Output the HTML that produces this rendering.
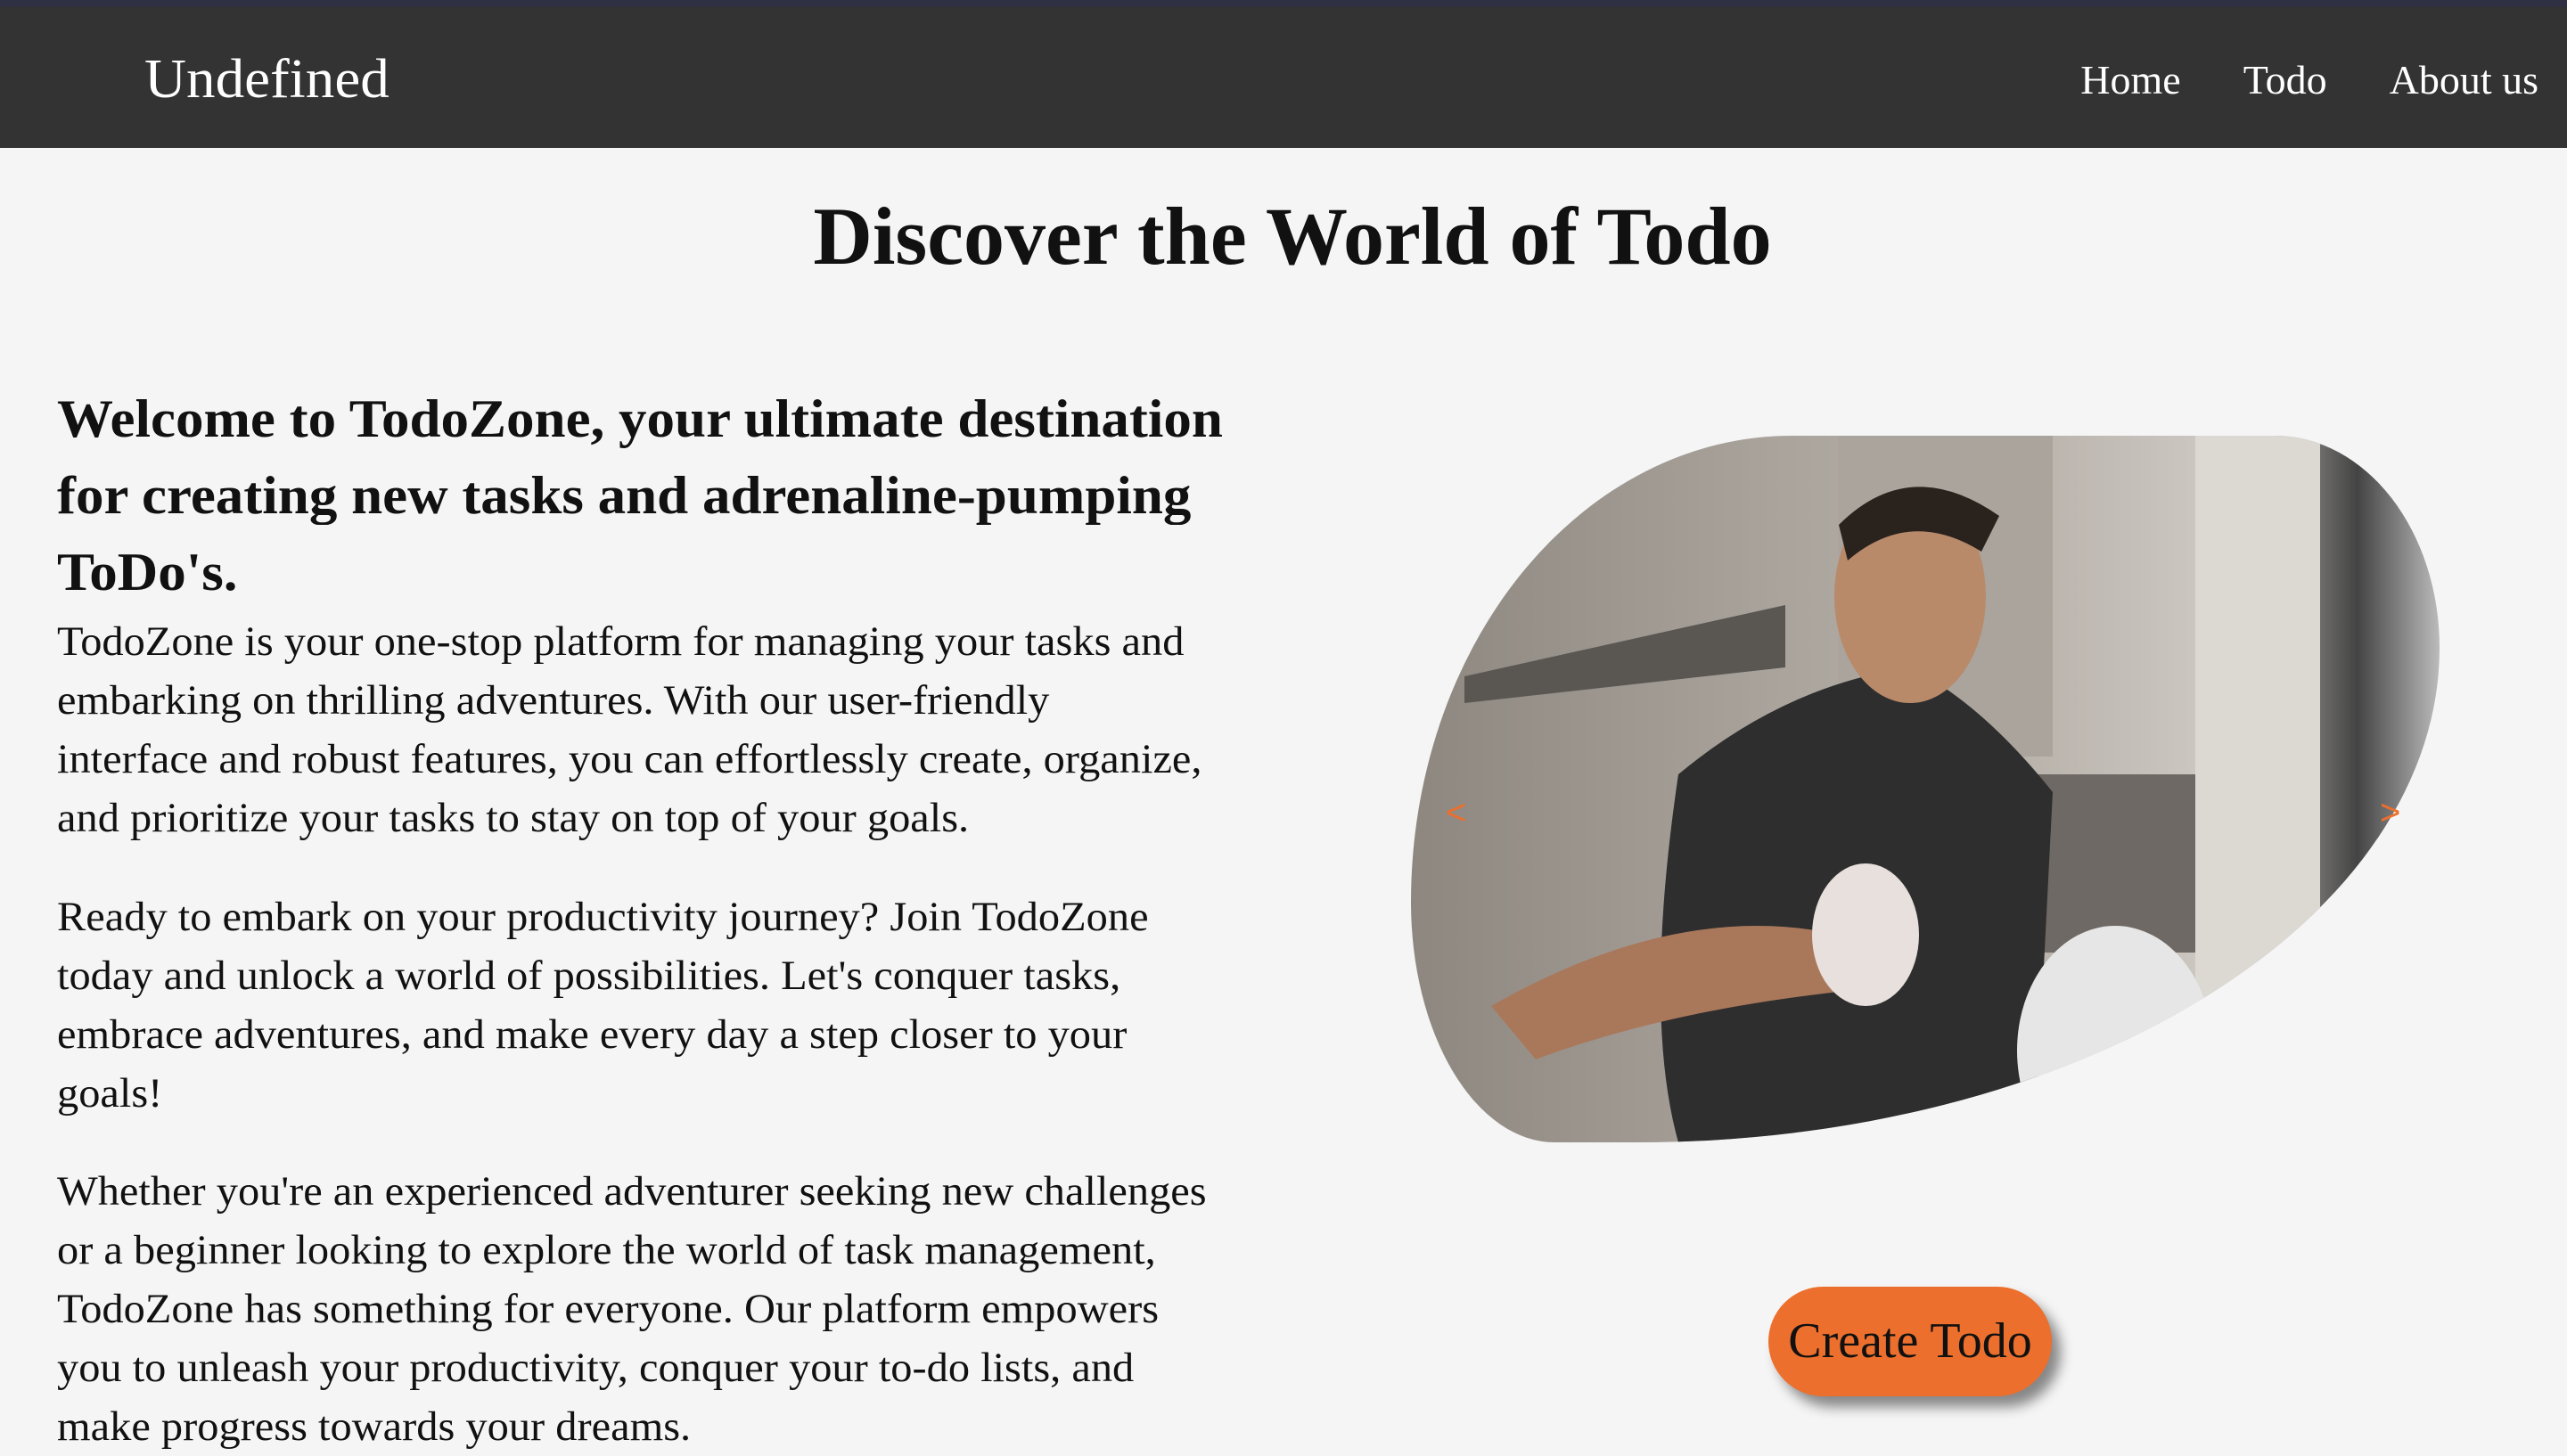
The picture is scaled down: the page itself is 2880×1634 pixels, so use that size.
<!DOCTYPE html>
<html><head><meta charset="utf-8"><style>
*{margin:0;padding:0;box-sizing:border-box}
body{width:2880px;height:1594px;overflow:hidden;background:#f5f5f5;font-family:"Liberation Serif",serif;color:#111;position:relative}
.top{position:absolute;left:0;top:0;width:2880px;height:8px;background:#2f3142}
nav{position:absolute;left:0;top:8px;width:2880px;height:158px;background:#333}
.logo{position:absolute;left:162px;top:46px;font-size:62px;color:#fff;line-height:70px;transform:scaleX(1.05);transform-origin:left}
.links{position:absolute;right:32px;top:52px;font-size:46px;color:#fff;line-height:60px}
.links span{margin-left:70px}
h1{position:absolute;left:0;width:2880px;text-align:center;top:210px;font-size:92px;line-height:110px;font-weight:bold;transform:scaleX(1.0);padding-left:20px}
.col{position:absolute;left:64px;width:1500px}
.l{display:block;white-space:nowrap;transform-origin:left}
h2{position:absolute;left:64px;top:427px;font-size:60px;line-height:86px;font-weight:bold}
h2 .l{transform:scaleX(1.05)}
.p{font-size:47px;line-height:66px}
.p .l{transform:scaleX(1.03)}
.blob{position:absolute;left:1583px;top:489px;width:1154px;height:793px;border-radius:37% 16% 78% 14% / 66% 30% 70% 34%;overflow:hidden;
background:linear-gradient(90deg,#8d8780 0%,#a9a39c 35%,#b9b3ac 60%,#cfcac4 80%,#444 92%,#bbb 100%)}
.arrow{position:absolute;top:890px;font-size:40px;color:#ec6f2d;font-family:"Liberation Sans",sans-serif}
.btn{position:absolute;left:1984px;top:1444px;width:318px;height:123px;border-radius:62px;background:#ec6f2d;box-shadow:10px 12px 14px rgba(0,0,0,.45);font-size:56px;line-height:123px;text-align:center;color:#111}
</style></head><body>
<div class="top"></div>
<nav><div class="logo">Undefined</div><div class="links"><span>Home</span><span>Todo</span><span>About us</span></div></nav>
<h1>Discover the World of Todo</h1>
<h2><span class="l">Welcome to TodoZone, your ultimate destination</span><span class="l">for creating new tasks and adrenaline-pumping</span><span class="l">ToDo's.</span></h2>
<div class="col p" style="top:687px"><span class="l">TodoZone is your one-stop platform for managing your tasks and</span><span class="l">embarking on thrilling adventures. With our user-friendly</span><span class="l">interface and robust features, you can effortlessly create, organize,</span><span class="l">and prioritize your tasks to stay on top of your goals.</span></div>
<div class="col p" style="top:996px"><span class="l">Ready to embark on your productivity journey? Join TodoZone</span><span class="l">today and unlock a world of possibilities. Let's conquer tasks,</span><span class="l">embrace adventures, and make every day a step closer to your</span><span class="l">goals!</span></div>
<div class="col p" style="top:1304px"><span class="l">Whether you're an experienced adventurer seeking new challenges</span><span class="l">or a beginner looking to explore the world of task management,</span><span class="l">TodoZone has something for everyone. Our platform empowers</span><span class="l">you to unleash your productivity, conquer your to-do lists, and</span><span class="l">make progress towards your dreams.</span></div>
<div class="blob">
<svg width="1154" height="793" viewBox="0 0 1154 793">
<polygon points="60,300 420,260 420,190 60,270" fill="#5a5753"/>
<rect x="480" y="0" width="240" height="360" fill="#aaa49d"/>
<rect x="680" y="380" width="200" height="200" fill="#6e6964"/>
<rect x="880" y="0" width="140" height="793" fill="#dcd8d2"/>
<path d="M300 380 Q420 280 560 260 Q640 300 720 400 L700 793 L300 793 Q260 650 300 380Z" fill="#2e2e2e"/>
<ellipse cx="560" cy="180" rx="85" ry="120" fill="#b88a6a"/>
<path d="M480 100 Q560 20 660 90 L640 130 Q560 80 490 140Z" fill="#2a221d"/>
<path d="M90 640 Q300 520 480 560 L520 620 Q300 640 140 700Z" fill="#a9785b"/>
<ellipse cx="510" cy="560" rx="60" ry="80" fill="#e8e0dc"/>
<ellipse cx="790" cy="690" rx="110" ry="140" fill="#e6e6e6"/>
<rect x="760" y="700" width="70" height="90" fill="#d8cf50"/>
</svg>
</div>
<div class="arrow" style="left:1622px">&lt;</div>
<div class="arrow" style="left:2670px">&gt;</div>
<div class="btn">Create Todo</div>
</body></html>
